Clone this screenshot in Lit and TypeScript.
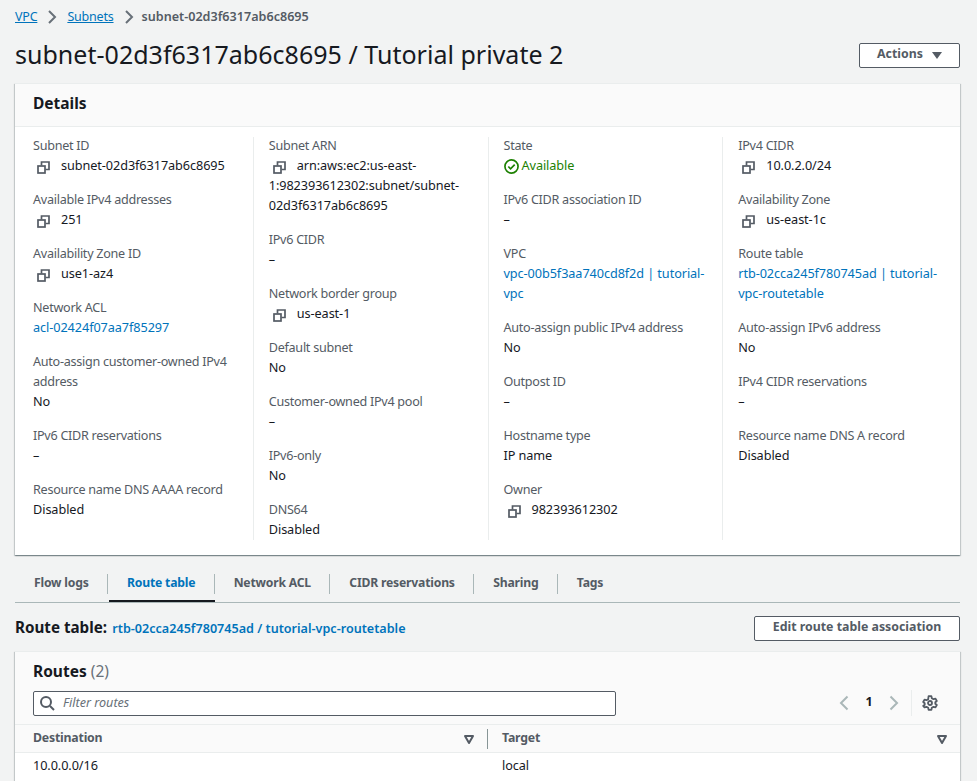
import { LitElement, html, css } from "lit";
import { customElement } from "lit/decorators.js";

const copy = html`<svg class="copy" viewBox="0 0 13 13" fill="none" stroke="#545b64" stroke-width="1.7"><rect x="1" y="5" width="7" height="7"/><path d="M4.5 4.5V1H12v7.5H8.5"/></svg>`;
const chev = html`<svg class="chev" viewBox="0 0 16 16" fill="none" stroke="#687078" stroke-width="2"><path d="M5 2l6 6-6 6"/></svg>`;
const check = html`<svg class="check" viewBox="0 0 16 16" fill="none" stroke="#1d8102" stroke-width="1.8"><circle cx="8" cy="8" r="7"/><path d="M4.6 8l2.4 2.4 4.4-4.4"/></svg>`;
const sort = html`<svg class="sort" viewBox="0 0 12 12"><path d="M2 3h8L6 10z" fill="none" stroke="#545b64" stroke-width="2" stroke-linejoin="round"/></svg>`;

type V = { label: string; value: unknown; icon?: boolean; link?: boolean; ok?: boolean };
const cols: V[][] = [
  [
    { label: "Subnet ID", value: "subnet-02d3f6317ab6c8695", icon: true },
    { label: "Available IPv4 addresses", value: "251", icon: true },
    { label: "Availability Zone ID", value: "use1-az4", icon: true },
    { label: "Network ACL", value: "acl-02424f07aa7f85297", link: true },
    { label: "Auto-assign customer-owned IPv4 address", value: "No" },
    { label: "IPv6 CIDR reservations", value: "–" },
    { label: "Resource name DNS AAAA record", value: "Disabled" },
  ],
  [
    { label: "Subnet ARN", value: "arn:aws:ec2:us-east-1:982393612302:subnet/subnet-02d3f6317ab6c8695", icon: true },
    { label: "IPv6 CIDR", value: "–" },
    { label: "Network border group", value: "us-east-1", icon: true },
    { label: "Default subnet", value: "No" },
    { label: "Customer-owned IPv4 pool", value: "–" },
    { label: "IPv6-only", value: "No" },
    { label: "DNS64", value: "Disabled" },
  ],
  [
    { label: "State", value: "Available", ok: true },
    { label: "IPv6 CIDR association ID", value: "–" },
    { label: "VPC", value: "vpc-00b5f3aa740cd8f2d | tutorial-vpc", link: true },
    { label: "Auto-assign public IPv4 address", value: "No" },
    { label: "Outpost ID", value: "–" },
    { label: "Hostname type", value: "IP name" },
    { label: "Owner", value: "982393612302", icon: true },
  ],
  [
    { label: "IPv4 CIDR", value: "10.0.2.0/24", icon: true },
    { label: "Availability Zone", value: "us-east-1c", icon: true },
    { label: "Route table", value: "rtb-02cca245f780745ad | tutorial-vpc-routetable", link: true },
    { label: "Auto-assign IPv6 address", value: "No" },
    { label: "IPv4 CIDR reservations", value: "–" },
    { label: "Resource name DNS A record", value: "Disabled" },
  ],
];
const tabs = ["Flow logs", "Route table", "Network ACL", "CIDR reservations", "Sharing", "Tags"];

@customElement("app-root")
export class AppRoot extends LitElement {
  static styles = css`
    :host { display: block; height: 781px; overflow: hidden; background: #f2f3f3; color: #16191f;
      font: 12.7px/20px "Noto Sans", sans-serif; letter-spacing: -0.08px; box-sizing: border-box; padding: 0 17px 0 15px; }
    a { color: #0073bb; text-decoration: none; }
    .crumbs { display: flex; align-items: center; height: 20px; padding-top: 7px; gap: 7px; color: #545b64; font-weight: 600; font-size: 12.6px; letter-spacing: 0; }
    .crumbs a { text-decoration: underline; font-weight: 400; font-size: 12.5px; letter-spacing: -0.2px; }
    .crumbs span { margin-left: -2px; }
    .chev { width: 16px; height: 16px; flex: none; }
    .head { display: flex; justify-content: space-between; align-items: flex-start; margin-top: 9px; height: 47px; }
    h1 { margin: 0; font-size: 25px; font-weight: 400; line-height: 36px; letter-spacing: 0.02px; }
    .btn { box-sizing: border-box; border: 1px solid #545b64; border-radius: 2px; background: #fff; color: #545b64; font-weight: 700; font-size: 12.35px; letter-spacing: 0;
      display: flex; align-items: center; justify-content: center; line-height: 18px; padding-bottom: 3px; }
    .actions { width: 101px; height: 25px; margin-top: 7px; gap: 9px; }
    .tri { width: 0; height: 0; border: 5px solid transparent; border-top: 7px solid #545b64; border-bottom: 0; margin-top: 3px; }
    .card { background: #fff; box-shadow: 0 1px 1px 0 rgba(0,28,36,.3), 1px 1px 1px 0 rgba(0,28,36,.15), -1px 1px 1px 0 rgba(0,28,36,.15); border-top: 1px solid #eaeded; }
    .card-h { background: #fafafa; border-bottom: 1px solid #eaeded; padding: 7px 18px 11px; height: 24px; font-size: 15.5px; font-weight: 700; line-height: 24px; letter-spacing: 0; }
    .grid { display: grid; grid-template-columns: repeat(4, 1fr); padding: 10px 3px 15px 3px; }
    .col { padding: 0 8px 0 15px; border-left: 1px solid #eaeded; height: 403px; box-sizing: border-box; display: flex; flex-direction: column; gap: 14px; }
    .col > :first-child { margin-top: -2px; }
    .col:first-child { border-left: 0; }
    .label { color: #545b64; font-size: 12.6px; letter-spacing: -0.27px; padding-top: 1px; margin-bottom: -1px; }
    .copy { width: 13px; height: 13px; vertical-align: -4px; margin: 0 11px 0 4px; }
    .ok { color: #1d8102; display: flex; align-items: center; gap: 3px; }
    .check { width: 15px; height: 15px; margin-top: 2px; }
    .tabs { display: flex; margin-top: 10px; height: 37px; border-bottom: 1px solid #aab7b8; }
    .tab { position: relative; box-sizing: border-box; height: 37px; padding: 8px 19.4px 0 19px; font-weight: 700; color: #545b64; font-size: 12.2px; letter-spacing: -0.2px; }
    .tab::after { content: ""; position: absolute; right: 0; top: 9px; height: 20px; width: 1px; background: #aab7b8; }
    .tab:last-child::after { display: none; }
    .tab.on { color: #0073bb; border-bottom: 2px solid #16191f; margin-left: 1px; padding-left: 18px; }
    .rt { display: flex; justify-content: space-between; align-items: center; margin-top: 13px; height: 25px; }
    .rt-l { padding-bottom: 2px; }
    .rt b { font-size: 15.2px; font-weight: 700; letter-spacing: 0; }
    .rt a { font-weight: 600; font-size: 12.6px; letter-spacing: 0; margin-left: 2px; }
    .edit { width: 206px; height: 25px; }
    .routes { margin-top: 10px; }
    .r-head { background: #fafafa; height: 73px; box-sizing: border-box; padding: 7px 18px 0; border-bottom: 1px solid #eaeded; }
    .r-title { font-size: 15.5px; font-weight: 700; line-height: 24px; letter-spacing: 0; }
    .r-title span { font-weight: 400; color: #687078; }
    .tools { display: flex; align-items: center; margin-top: 7px; }
    .filter { box-sizing: border-box; width: 583px; height: 25px; border: 1px solid #545b64; border-radius: 2px; background: #fff; display: flex; align-items: center; gap: 8px; padding: 0 0 1px 5px; color: #687078; font-style: italic; font-size: 12.6px; letter-spacing: 0; line-height: 18px; }
    .filter svg { flex: none; }
    .page { display: flex; align-items: center; margin-left: auto; margin-right: 4px; }
    .page svg { width: 16px; height: 16px; }
    .page b { width: 34px; text-align: center; font-size: 12.5px; line-height: 16px; padding-bottom: 2px; }
    .sep { width: 1px; height: 26px; background: #eaeded; margin: 0 10px 0 9px; }
    .thead, .row { display: grid; grid-template-columns: 472px 1fr; }
    .thead { background: #fafafa; box-sizing: border-box; height: 28px; border-bottom: 1px solid #eaeded; font-weight: 700; color: #545b64; font-size: 12.3px; letter-spacing: -0.2px; align-items: center; }
    .th { display: flex; justify-content: space-between; align-items: center; padding: 0 12px 2px 18px; height: 18px; }
    .th + .th { border-left: 1px solid #879596; padding-left: 14px; }
    .sort { width: 12px; height: 12px; margin-top: 2px; }
    .row { height: 40px; padding-top: 2px; box-sizing: border-box; }
    .row div { padding-left: 18px; }
    .row div + div { padding-left: 15px; }
  `;
  private value(v: V) {
    if (v.ok) return html`<div class="ok">${check}<span>${v.value}</span></div>`;
    if (v.link) return html`<div><a href="#">${v.value}</a></div>`;
    return html`<div>${v.icon ? copy : ""}${v.value}</div>`;
  }
  render() {
    return html`
      <nav class="crumbs"><a href="#">VPC</a>${chev}<a href="#">Subnets</a>${chev}<span>subnet-02d3f6317ab6c8695</span></nav>
      <div class="head"><h1>subnet-02d3f6317ab6c8695 / Tutorial private 2</h1>
        <div class="btn actions">Actions <span class="tri"></span></div></div>
      <section class="card">
        <div class="card-h">Details</div>
        <div class="grid">
          ${cols.map((c) => html`<div class="col">${c.map((v) => html`<div><div class="label">${v.label}</div>${this.value(v)}</div>`)}</div>`)}
        </div>
      </section>
      <div class="tabs">${tabs.map((t, i) => html`<div class="tab ${i === 1 ? "on" : ""}">${t}</div>`)}</div>
      <div class="rt"><div class="rt-l"><b>Route table:</b> <a href="#">rtb-02cca245f780745ad / tutorial-vpc-routetable</a></div>
        <div class="btn edit">Edit route table association</div></div>
      <section class="card routes">
        <div class="r-head">
          <div class="r-title">Routes <span>(2)</span></div>
          <div class="tools">
            <div class="filter"><svg width="16" height="16" viewBox="0 0 16 16" fill="none" stroke="#545b64" stroke-width="2"><circle cx="7" cy="7" r="5"/><path d="M11 11l4 4"/></svg>Filter routes</div>
            <div class="page">
              <svg viewBox="0 0 16 16" fill="none" stroke="#aab7b8" stroke-width="2"><path d="M11.5 1.5L5 8l6.5 6.5"/></svg>
              <b>1</b>
              <svg viewBox="0 0 16 16" fill="none" stroke="#aab7b8" stroke-width="2"><path d="M4.5 1.5L11 8l-6.5 6.5"/></svg>
              <span class="sep"></span>
              <svg viewBox="0 0 16 16" fill="none" stroke="#545b64" stroke-width="1.8"><circle cx="8" cy="8" r="2"/><path d="M6.6 1.2h2.8l.4 2 1.7 1 2-.6 1.3 2.4-1.5 1.3v1.4l1.5 1.3-1.3 2.4-2-.6-1.7 1-.4 2H6.6l-.4-2-1.7-1-2 .6L1.2 11l1.5-1.3V8.3L1.2 7l1.3-2.4 2 .6 1.7-1z" stroke-linejoin="round"/></svg>
            </div>
          </div>
        </div>
        <div class="thead"><div class="th">Destination ${sort}</div><div class="th">Target ${sort}</div></div>
        <div class="row"><div>10.0.0.0/16</div><div>local</div></div>
      </section>
    `;
  }
}
